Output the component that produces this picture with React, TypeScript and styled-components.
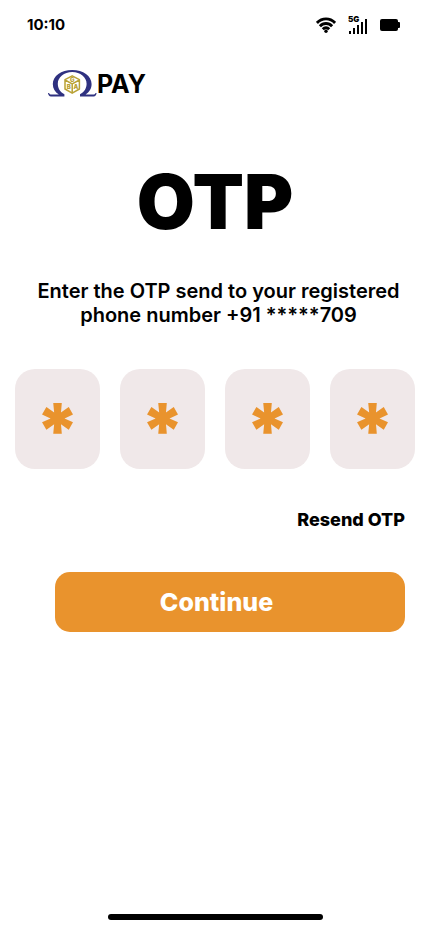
import React, { useState } from "react";
import styled, { createGlobalStyle } from "styled-components";

const GlobalStyle = createGlobalStyle`
  *, *::before, *::after { box-sizing: border-box; }
  body {
    margin: 0;
    background: #fff;
    color: #000;
    font-family: Inter, "Liberation Sans", sans-serif;
  }
  button, input { font-family: inherit; }
`;

const Screen = styled.div`
  display: flex;
  flex-direction: column;
  min-height: 100vh;
`;

const StatusBar = styled.header`
  display: flex;
  align-items: center;
  justify-content: space-between;
  height: 50px;
  padding: 0 29px 0 27px;
`;

const Clock = styled.time`
  font-size: 15px;
  font-weight: 700;
  line-height: 20px;
`;

const StatusIcons = styled.div`
  display: flex;
  align-items: center;
  gap: 12px;
`;

const Main = styled.main`
  display: flex;
  flex: 1;
  flex-direction: column;
`;

const Brand = styled.div`
  display: flex;
  align-items: center;
  height: 30px;
  margin-top: 19px;
  padding-left: 48px;
`;

const BrandName = styled.span`
  font-size: 25px;
  font-weight: 700;
  line-height: 30px;
`;

const Title = styled.h1`
  margin: 57px 0 0;
  font-size: 75px;
  font-weight: 900;
  line-height: 92px;
  text-align: center;
`;

const Hint = styled.p`
  margin: 31px 0 0;
  padding: 0 28px 0 35px;
  font-size: 20px;
  font-weight: 600;
  line-height: 24px;
  text-align: center;
`;

const OtpForm = styled.form`
  display: flex;
  flex-direction: column;
  margin-top: 42px;
`;

const Digits = styled.div`
  display: grid;
  grid-template-columns: repeat(4, 1fr);
  gap: 20px;
  padding: 0 15px;
`;

const DigitInput = styled.input`
  width: 100%;
  height: 100px;
  padding: 22px 0 0;
  border: 0;
  border-radius: 20px;
  background: #f0e8e9;
  color: #e9932d;
  font-size: 75px;
  font-weight: 900;
  line-height: 76px;
  text-align: center;
`;

const ResendButton = styled.button`
  align-self: flex-end;
  margin: 40px 25px 0 0;
  padding: 0;
  border: 0;
  background: none;
  color: #000;
  font-size: 18px;
  font-weight: 800;
  line-height: 22px;
  cursor: pointer;
`;

const ContinueButton = styled.button`
  height: 60px;
  margin: 41px 25px 0 55px;
  padding: 0 27px 0 0;
  border: 0;
  border-radius: 15px;
  background: #e9932d;
  color: #fff;
  font-size: 25px;
  font-weight: 800;
  line-height: 30px;
  cursor: pointer;
`;

const HomeIndicator = styled.div`
  align-self: center;
  width: 50%;
  height: 6px;
  margin-bottom: 12px;
  border-radius: 3px;
  background: #000;
`;

const LogoLetter = styled.text`
  fill: #b9a236;
  font-size: 6px;
  font-weight: 900;
  text-anchor: middle;
`;

const Logo = () => (
  <svg width="49" height="30" viewBox="0 0 49 30" role="img" aria-label="GBA logo">
    <path
      fill="#2f3180"
      d="M0 24 C.4 26 1.2 27.6 3 27.6 H16.4 V25.3 C11.8 23 9.8 19 9.8 14.8 C9.8 8.3 16 3.1 24.2 3.1 C32.4 3.1 38.6 8.3 38.6 14.8 C38.6 19 36.6 23 32 25.3 V27.6 H45.6 C47.4 27.6 48.2 26 48.6 24 H47.5 C47.2 25.1 46.4 25.5 45 25.5 H37.6 C41.4 23.2 43.6 19.5 43.6 15 C43.6 6.8 35.2 .9 24.2 .9 C13.2 .9 4.8 6.8 4.8 15 C4.8 19.5 7 23.2 10.8 25.5 H3.6 C2.2 25.5 1.4 25.1 1.1 24 Z"
    />
    <path
      fill="none"
      stroke="#b9a236"
      strokeWidth="1.5"
      strokeLinejoin="round"
      d="M24.2 6.8 L31.4 10.6 V20 L24.2 24.2 L17 20 V10.6 Z M17 11 L24.2 14.8 L31.4 11 M24.2 14.8 V24"
    />
    <LogoLetter x="24.2" y="12.8">G</LogoLetter>
    <LogoLetter x="20.7" y="20.4">B</LogoLetter>
    <LogoLetter x="27.8" y="20.4">A</LogoLetter>
  </svg>
);

const WifiIcon = () => (
  <svg width="20" height="18" viewBox="0 0 20 18" aria-hidden="true">
    <g fill="none" stroke="#000" strokeWidth="2.9">
      <path d="M.9 6.9 C6 1.5 14 1.5 19.1 6.9" />
      <path d="M3.9 10.2 C7.3 6.6 12.7 6.6 16.1 10.2" />
      <path d="M6.8 13.2 C8.6 11.3 11.4 11.3 13.2 13.2" />
    </g>
    <circle cx="10" cy="15.3" r="1.7" />
  </svg>
);

const NetworkLabel = styled.text`
  font-size: 8px;
  font-weight: 900;
`;

const SignalIcon = () => (
  <svg width="20" height="20" viewBox="0 0 20 20" role="img" aria-label="5G signal">
    <NetworkLabel x="0" y="7">5G</NetworkLabel>
    <path d="M1 16h2v3H1z M5 13h2v6H5z M9 10h2v9H9z M13 7h2v12h-2z M17 4h2v15h-2z" />
  </svg>
);

const BatteryIcon = () => (
  <svg width="21" height="12" viewBox="0 0 21 12" aria-hidden="true">
    <rect width="18" height="12" rx="2" />
    <rect x="16" y="3" width="4" height="6" rx="1" />
  </svg>
);

export default function App() {
  const [code, setCode] = useState(["*", "*", "*", "*"]);

  const update = (index: number, value: string) =>
    setCode((current) => current.map((digit, i) => (i === index ? value : digit)));

  return (
    <Screen>
      <GlobalStyle />
      <StatusBar>
        <Clock>10:10</Clock>
        <StatusIcons>
          <WifiIcon />
          <SignalIcon />
          <BatteryIcon />
        </StatusIcons>
      </StatusBar>
      <Main>
        <Brand>
          <Logo />
          <BrandName>PAY</BrandName>
        </Brand>
        <Title>OTP</Title>
        <Hint>Enter the OTP send to your registered phone number +91 *****709</Hint>
        <OtpForm onSubmit={(event: React.FormEvent) => event.preventDefault()}>
          <Digits role="group" aria-label="One-time password">
            {code.map((digit, index) => (
              <DigitInput
                key={index}
                type="text"
                inputMode="numeric"
                maxLength={1}
                aria-label={`Digit ${index + 1}`}
                value={digit}
                onChange={(event) => update(index, event.target.value)}
              />
            ))}
          </Digits>
          <ResendButton type="button">Resend OTP</ResendButton>
          <ContinueButton type="submit">Continue</ContinueButton>
        </OtpForm>
      </Main>
      <HomeIndicator />
    </Screen>
  );
}
